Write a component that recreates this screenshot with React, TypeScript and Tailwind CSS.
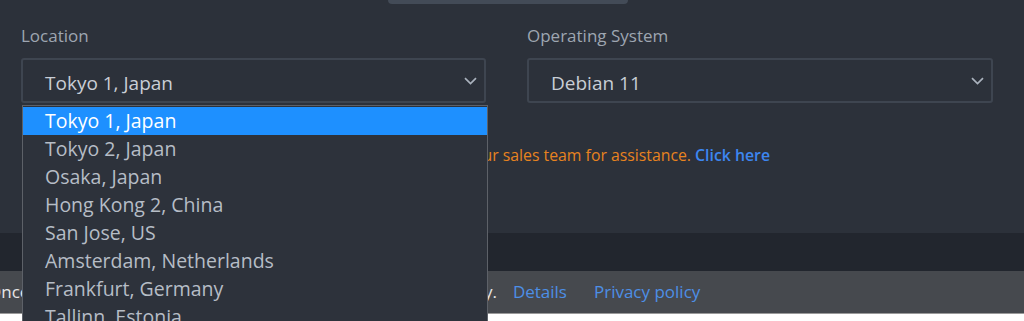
import React from "react";

const items = [
  "Tokyo 1, Japan",
  "Tokyo 2, Japan",
  "Osaka, Japan",
  "Hong Kong 2, China",
  "San Jose, US",
  "Amsterdam, Netherlands",
  "Frankfurt, Germany",
  "Tallinn, Estonia",
  "Singapore",
];

function Chevron() {
  return (
    <svg width="13" height="8" viewBox="0 0 13 8" fill="none">
      <path d="M1 1.2 L6.5 6.5 L12 1.2" stroke="#aab2bd" strokeWidth="1.7" />
    </svg>
  );
}

function SelectBox({ value }: { value: string }) {
  return (
    <div className="h-[45px] rounded-[3px] border-2 border-[#3e4550] flex items-center justify-between pl-[22px] pr-[7px] text-[19px] text-[#c9ced6]">
      <span className="pt-[6px]">{value}</span>
      <Chevron />
    </div>
  );
}

export default function App() {
  return (
    <div
      className="w-[1024px] h-[321px] overflow-hidden bg-white relative"
      style={{ fontFamily: '"Open Sans", "Noto Sans", sans-serif' }}
    >
      <div className="bg-[#2c313a] h-[233px] flex flex-col">
        <div className="flex justify-center pr-[8px]">
          <div className="w-[240px] h-[4px] bg-[#434b57] rounded-b-[6px]" />
        </div>
        <div className="grid grid-cols-[465px_466px] gap-x-[41px] pl-[21px] pt-[21px]">
          <div className="flex flex-col gap-[11px]">
            <div className="text-[17px] leading-[22px] text-[#9ea6b1]">Location</div>
            <SelectBox value="Tokyo 1, Japan" />
          </div>
          <div className="flex flex-col gap-[11px]">
            <div className="text-[17px] leading-[22px] text-[#9ea6b1]">Operating System</div>
            <SelectBox value="Debian 11" />
          </div>
        </div>
        <div className="pl-[21px] pt-[40px] text-[15.8px] leading-[24px] whitespace-nowrap">
          <span className="text-[#e8831f]">
            If the location you need is not listed above, please do contact our sales team for assistance.
          </span>{" "}
          <span className="text-[#3d86f0] font-semibold">Click here</span>
        </div>
      </div>
      <div className="h-[38px] bg-[#22262e]" />
      <div className="h-[43px] bg-[#46494e] flex items-center text-[17px] whitespace-nowrap border-b border-[#9a9a9a]">
        <span className="text-[#e6e6e6] ml-[-12px]">
          Once you continue browsing, you agree to our site cookie policy.
        </span>
        <span className="text-[#4d8fe6] ml-[16px]">Details</span>
        <span className="text-[#4d8fe6] ml-[27px]">Privacy policy</span>
      </div>

      <div className="absolute left-[22px] top-[105px] w-[466px] h-[240px] bg-[#2d323b] border border-[#5d6168] pt-[1px]">
        {items.map((it, i) => (
          <div
            key={it}
            className={
              i === 0
                ? "h-[28px] leading-[28px] pl-[22px] text-[19.5px] bg-[#1e90ff] text-white"
                : "h-[28px] leading-[28px] pl-[22px] text-[19.5px] text-[#b6bdc6]"
            }
          >
            {it}
          </div>
        ))}
      </div>
    </div>
  );
}
